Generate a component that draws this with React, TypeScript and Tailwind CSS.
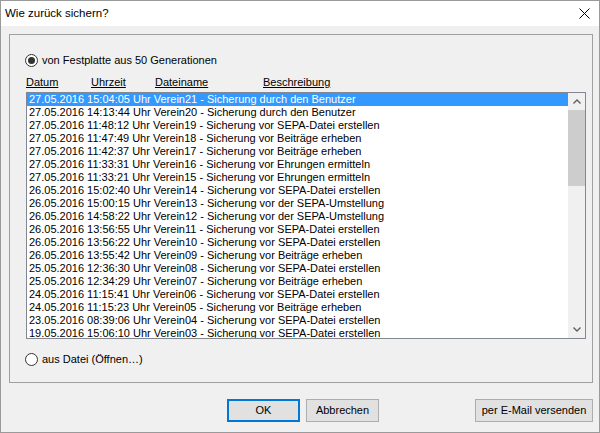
const rows = [
  "27.05.2016 15:04:05 Uhr Verein21 - Sicherung durch den Benutzer",
  "27.05.2016 14:13:44 Uhr Verein20 - Sicherung durch den Benutzer",
  "27.05.2016 11:48:12 Uhr Verein19 - Sicherung vor SEPA-Datei erstellen",
  "27.05.2016 11:47:49 Uhr Verein18 - Sicherung vor Beiträge erheben",
  "27.05.2016 11:42:37 Uhr Verein17 - Sicherung vor Beiträge erheben",
  "27.05.2016 11:33:31 Uhr Verein16 - Sicherung vor Ehrungen ermitteln",
  "27.05.2016 11:33:21 Uhr Verein15 - Sicherung vor Ehrungen ermitteln",
  "26.05.2016 15:02:40 Uhr Verein14 - Sicherung vor SEPA-Datei erstellen",
  "26.05.2016 15:00:15 Uhr Verein13 - Sicherung vor der SEPA-Umstellung",
  "26.05.2016 14:58:22 Uhr Verein12 - Sicherung vor der SEPA-Umstellung",
  "26.05.2016 13:56:55 Uhr Verein11 - Sicherung vor SEPA-Datei erstellen",
  "26.05.2016 13:56:22 Uhr Verein10 - Sicherung vor SEPA-Datei erstellen",
  "26.05.2016 13:55:42 Uhr Verein09 - Sicherung vor Beiträge erheben",
  "25.05.2016 12:36:30 Uhr Verein08 - Sicherung vor SEPA-Datei erstellen",
  "25.05.2016 12:34:29 Uhr Verein07 - Sicherung vor Beiträge erheben",
  "24.05.2016 11:15:41 Uhr Verein06 - Sicherung vor SEPA-Datei erstellen",
  "24.05.2016 11:15:23 Uhr Verein05 - Sicherung vor Beiträge erheben",
  "23.05.2016 08:39:06 Uhr Verein04 - Sicherung vor SEPA-Datei erstellen",
  "19.05.2016 15:06:10 Uhr Verein03 - Sicherung vor SEPA-Datei erstellen",
];

function Radio({ checked }: { checked?: boolean }) {
  return (
    <span className="flex h-[13px] w-[13px] shrink-0 items-center justify-center rounded-full border border-[#333] bg-white">
      {checked && <span className="h-[7px] w-[7px] rounded-full bg-[#333]" />}
    </span>
  );
}

function Chevron({ down }: { down?: boolean }) {
  return (
    <svg width="8" height="5" viewBox="0 0 8 5" className={down ? "rotate-180" : ""}>
      <path d="M0.5 4.5 L4 1 L7.5 4.5" fill="none" stroke="#606060" strokeWidth="1.4" />
    </svg>
  );
}

export default function App() {
  return (
    <div className="flex h-[433px] w-[600px] flex-col border border-[#9a9a9a] bg-[#f0f0f0] font-['Liberation_Sans',Arial,sans-serif] text-[11px] text-black">
      {/* Title bar */}
      <div className="flex h-[25px] shrink-0 items-center justify-between bg-white pl-[4px] pr-[9px]">
        <span className="text-[11.5px]">Wie zurück sichern?</span>
        <svg width="11" height="11" viewBox="0 0 11 11">
          <path d="M0.5 0.5 L10.5 10.5 M10.5 0.5 L0.5 10.5" stroke="#000" strokeWidth="1" />
        </svg>
      </div>

      <div className="flex flex-1 flex-col pl-[8px] pr-[6px] pt-[8px]">
        {/* Group box */}
        <div className="flex h-[349px] flex-col border border-[#a0a0a0]">
          <label className="ml-[15px] mt-[18px] flex h-[14px] items-center gap-[4px]">
            <Radio checked />
            <span>von Festplatte aus 50 Generationen</span>
          </label>

          <div className="relative ml-[16px] mt-[8px] h-[14px] leading-[14px]">
            <span className="absolute left-0 underline">Datum</span>
            <span className="absolute left-[65px] underline">Uhrzeit</span>
            <span className="absolute left-[129px] underline">Dateiname</span>
            <span className="absolute left-[237px] underline">Beschreibung</span>
          </div>

          {/* List box */}
          <div className="ml-[16px] mt-[3px] flex h-[247px] w-[560px] border border-[#828790] bg-white">
            <div className="flex-1 overflow-hidden leading-[13px]">
              {rows.map((r, i) => (
                <div
                  key={i}
                  className={`h-[13px] whitespace-pre pl-[2px] ${i === 0 ? "bg-[#3399ff] text-white" : ""}`}
                >
                  {r}
                </div>
              ))}
            </div>
            <div className="flex w-[17px] flex-col bg-[#f0f0f0]">
              <div className="flex h-[17px] items-center justify-center">
                <Chevron />
              </div>
              <div className="h-[76px] bg-[#cdcdcd]" />
              <div className="flex-1" />
              <div className="flex h-[17px] items-center justify-center">
                <Chevron down />
              </div>
            </div>
          </div>

          <label className="ml-[15px] mt-[13px] flex h-[14px] items-center gap-[4px]">
            <Radio />
            <span>aus Datei (Öffnen…)</span>
          </label>
        </div>

        {/* Buttons */}
        <div className="mt-[16px] flex pl-[218px]">
          <button className="h-[23px] w-[73px] border-2 border-[#0078d7] bg-[#e1e1e1]">OK</button>
          <button className="ml-[6px] h-[23px] w-[73px] border border-[#adadad] bg-[#e1e1e1]">Abbrechen</button>
          <button className="ml-auto h-[23px] w-[118px] border border-[#adadad] bg-[#e1e1e1]">per E-Mail versenden</button>
        </div>
      </div>
    </div>
  );
}
